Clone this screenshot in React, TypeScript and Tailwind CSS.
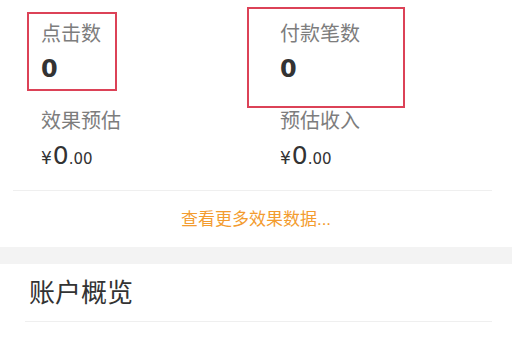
import React from "react";

/**
 * Stat cell: gray label over a dark number.
 */
function Stat({ label, children }: { label: string; children: React.ReactNode }) {
  return (
    <div className="flex flex-col">
      <div className="text-[20px] leading-[28px] text-[#7d7d7d]">{label}</div>
      {children}
    </div>
  );
}

function Money() {
  return (
    <div className="mt-[8px] leading-[26px] text-[#333333] font-['DejaVu_Sans',sans-serif]">
      <span className="text-[17px]">¥</span>
      <span className="text-[25px] ml-[1px]">0</span>
      <span className="text-[15px]">.00</span>
    </div>
  );
}

function Count() {
  return (
    <div className="mt-[8px] text-[24px] leading-[26px] font-bold text-[#333333] font-['DejaVu_Sans',sans-serif]">
      0
    </div>
  );
}

export default function App() {
  return (
    <div className="relative w-[512px] h-[340px] overflow-hidden bg-white font-['Liberation_Sans','Noto_Sans_CJK_SC',sans-serif]">
      {/* Stats */}
      <section className="pt-[20px] pl-[41px]">
        <div className="grid grid-cols-[239px_1fr]">
          <Stat label="点击数">
            <Count />
          </Stat>
          <Stat label="付款笔数">
            <Count />
          </Stat>
        </div>
        <div className="grid grid-cols-[239px_1fr] mt-[25px]">
          <Stat label="效果预估">
            <Money />
          </Stat>
          <Stat label="预估收入">
            <Money />
          </Stat>
        </div>
      </section>

      <div className="mt-[18px] ml-[13px] mr-[20px] h-px bg-[#efefef]" />

      <div className="mt-[17px] text-center text-[17px] leading-[24px] text-[#f39c2f]">
        查看更多效果数据...
      </div>

      <div className="mt-[15px] h-[17px] bg-[#f3f3f3]" />

      {/* Account overview */}
      <div className="mt-[13px] pl-[29px] text-[26px] leading-[32px] text-[#333333]">账户概览</div>
      <div className="mt-[12px] ml-[25px] mr-[20px] h-px bg-[#efefef]" />

      {/* Annotation boxes */}
      <div className="absolute left-[27px] top-[12px] w-[90px] h-[79px] border-2 border-[#dc4257]" />
      <div className="absolute left-[247px] top-[7px] w-[158px] h-[101px] border-2 border-[#dc4257]" />
    </div>
  );
}
